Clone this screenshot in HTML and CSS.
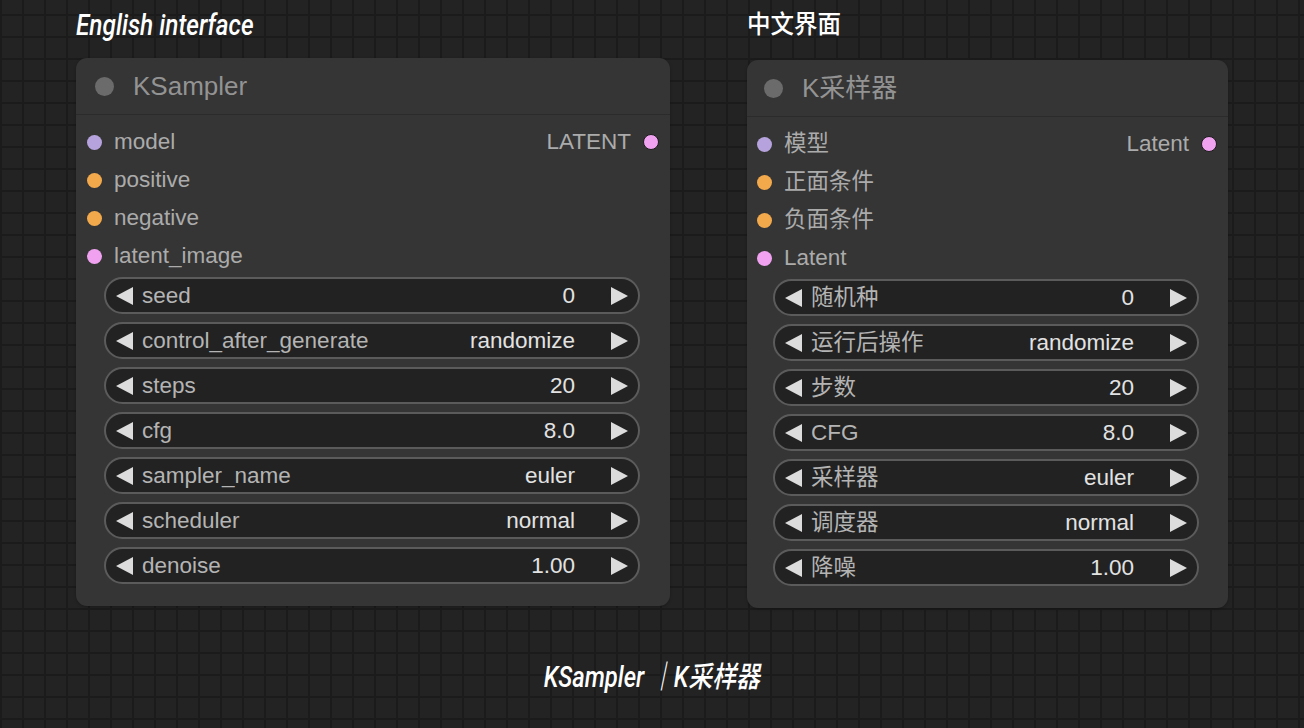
FILE: index.html
```html
<!DOCTYPE html>
<html lang="en">
  <head>
    <meta charset="UTF-8" />
    <meta name="viewport" content="width=device-width, initial-scale=1.0" />
    <title>KSampler | K采样器</title>
    <link rel="stylesheet" href="styles.css">
  </head>
  <body>
    <div class="board">
      <section class="panel panel-en">
        <h2 class="caption"><span>English interface</span></h2>
        <div class="node">
          <div class="node-head">
            <span class="head-dot"></span>
            <span class="node-title">KSampler</span>
          </div>
          <div class="slots">
            <div class="slot-row">
              <span class="slot"><i class="dot dot-model"></i>model</span>
              <span class="slot slot-out">LATENT<i class="dot dot-latent dot-out"></i></span>
            </div>
            <div class="slot-row">
              <span class="slot"><i class="dot dot-cond"></i>positive</span>
            </div>
            <div class="slot-row">
              <span class="slot"><i class="dot dot-cond"></i>negative</span>
            </div>
            <div class="slot-row">
              <span class="slot"><i class="dot dot-latent"></i>latent_image</span>
            </div>
          </div>
          <div class="widgets">
            <div class="widget">
              <svg class="arrow" viewBox="0 0 17 18"><polygon points="0,9 17,0 17,18" /></svg>
              <span class="w-label">seed</span><span class="w-value">0</span>
              <svg class="arrow" viewBox="0 0 17 18"><polygon points="17,9 0,0 0,18" /></svg>
            </div>
            <div class="widget">
              <svg class="arrow" viewBox="0 0 17 18"><polygon points="0,9 17,0 17,18" /></svg>
              <span class="w-label">control_after_generate</span><span class="w-value">randomize</span>
              <svg class="arrow" viewBox="0 0 17 18"><polygon points="17,9 0,0 0,18" /></svg>
            </div>
            <div class="widget">
              <svg class="arrow" viewBox="0 0 17 18"><polygon points="0,9 17,0 17,18" /></svg>
              <span class="w-label">steps</span><span class="w-value">20</span>
              <svg class="arrow" viewBox="0 0 17 18"><polygon points="17,9 0,0 0,18" /></svg>
            </div>
            <div class="widget">
              <svg class="arrow" viewBox="0 0 17 18"><polygon points="0,9 17,0 17,18" /></svg>
              <span class="w-label">cfg</span><span class="w-value">8.0</span>
              <svg class="arrow" viewBox="0 0 17 18"><polygon points="17,9 0,0 0,18" /></svg>
            </div>
            <div class="widget">
              <svg class="arrow" viewBox="0 0 17 18"><polygon points="0,9 17,0 17,18" /></svg>
              <span class="w-label">sampler_name</span><span class="w-value">euler</span>
              <svg class="arrow" viewBox="0 0 17 18"><polygon points="17,9 0,0 0,18" /></svg>
            </div>
            <div class="widget">
              <svg class="arrow" viewBox="0 0 17 18"><polygon points="0,9 17,0 17,18" /></svg>
              <span class="w-label">scheduler</span><span class="w-value">normal</span>
              <svg class="arrow" viewBox="0 0 17 18"><polygon points="17,9 0,0 0,18" /></svg>
            </div>
            <div class="widget">
              <svg class="arrow" viewBox="0 0 17 18"><polygon points="0,9 17,0 17,18" /></svg>
              <span class="w-label">denoise</span><span class="w-value">1.00</span>
              <svg class="arrow" viewBox="0 0 17 18"><polygon points="17,9 0,0 0,18" /></svg>
            </div>
          </div>
        </div>
      </section>

      <section class="panel panel-zh">
        <h2 class="caption caption-zh"><span>中文界面</span></h2>
        <div class="node">
          <div class="node-head">
            <span class="head-dot"></span>
            <span class="node-title">K采样器</span>
          </div>
          <div class="slots">
            <div class="slot-row">
              <span class="slot"><i class="dot dot-model"></i>模型</span>
              <span class="slot slot-out">Latent<i class="dot dot-latent dot-out"></i></span>
            </div>
            <div class="slot-row">
              <span class="slot"><i class="dot dot-cond"></i>正面条件</span>
            </div>
            <div class="slot-row">
              <span class="slot"><i class="dot dot-cond"></i>负面条件</span>
            </div>
            <div class="slot-row">
              <span class="slot"><i class="dot dot-latent"></i>Latent</span>
            </div>
          </div>
          <div class="widgets">
            <div class="widget">
              <svg class="arrow" viewBox="0 0 17 18"><polygon points="0,9 17,0 17,18" /></svg>
              <span class="w-label">随机种</span><span class="w-value">0</span>
              <svg class="arrow" viewBox="0 0 17 18"><polygon points="17,9 0,0 0,18" /></svg>
            </div>
            <div class="widget">
              <svg class="arrow" viewBox="0 0 17 18"><polygon points="0,9 17,0 17,18" /></svg>
              <span class="w-label">运行后操作</span><span class="w-value">randomize</span>
              <svg class="arrow" viewBox="0 0 17 18"><polygon points="17,9 0,0 0,18" /></svg>
            </div>
            <div class="widget">
              <svg class="arrow" viewBox="0 0 17 18"><polygon points="0,9 17,0 17,18" /></svg>
              <span class="w-label">步数</span><span class="w-value">20</span>
              <svg class="arrow" viewBox="0 0 17 18"><polygon points="17,9 0,0 0,18" /></svg>
            </div>
            <div class="widget">
              <svg class="arrow" viewBox="0 0 17 18"><polygon points="0,9 17,0 17,18" /></svg>
              <span class="w-label">CFG</span><span class="w-value">8.0</span>
              <svg class="arrow" viewBox="0 0 17 18"><polygon points="17,9 0,0 0,18" /></svg>
            </div>
            <div class="widget">
              <svg class="arrow" viewBox="0 0 17 18"><polygon points="0,9 17,0 17,18" /></svg>
              <span class="w-label">采样器</span><span class="w-value">euler</span>
              <svg class="arrow" viewBox="0 0 17 18"><polygon points="17,9 0,0 0,18" /></svg>
            </div>
            <div class="widget">
              <svg class="arrow" viewBox="0 0 17 18"><polygon points="0,9 17,0 17,18" /></svg>
              <span class="w-label">调度器</span><span class="w-value">normal</span>
              <svg class="arrow" viewBox="0 0 17 18"><polygon points="17,9 0,0 0,18" /></svg>
            </div>
            <div class="widget">
              <svg class="arrow" viewBox="0 0 17 18"><polygon points="0,9 17,0 17,18" /></svg>
              <span class="w-label">降噪</span><span class="w-value">1.00</span>
              <svg class="arrow" viewBox="0 0 17 18"><polygon points="17,9 0,0 0,18" /></svg>
            </div>
          </div>
        </div>
      </section>
    </div>

    <p class="footer"><span>KSampler ｜K采样器</span></p>
  </body>
</html>
```

FILE: styles.css
```css
body {
  margin: 0;
  width: 1304px;
  height: 728px;
  overflow: hidden;
  background-color: #232323;
  background-image:
    linear-gradient(to right, #1b1b1b 2px, transparent 2px),
    linear-gradient(to bottom, #1b1b1b 2px, transparent 2px);
  background-size: 22px 22px;
  background-position: 0 14px;
  font-family: "Liberation Sans", "Noto Sans CJK SC", sans-serif;
}

.board {
  display: grid;
  grid-template-columns: 594px 481px;
  column-gap: 77px;
  padding-left: 76px;
}

.panel {
  display: flex;
  flex-direction: column;
}

.caption {
  margin: 8px 0 16px;
  height: 34px;
  line-height: 34px;
  font-family: Roboto, "Noto Sans CJK SC", sans-serif;
  font-style: italic;
  font-weight: 500;
  font-size: 29px;
  color: #fff;
  white-space: nowrap;
}

.caption span {
  display: inline-block;
  transform: scaleX(0.84);
  transform-origin: left center;
}

.caption-zh {
  font-size: 25px;
  font-style: normal;
}

.caption-zh span {
  transform: scaleX(0.94);
}

.panel-zh .node {
  margin-top: 2px;
}

.node {
  background-color: #353535;
  border-radius: 11px;
  padding-bottom: 22px;
  box-shadow: 0 1px 3px rgba(0, 0, 0, 0.25);
}

.node-head {
  height: 56px;
  display: flex;
  align-items: center;
  gap: 19px;
  padding-left: 19px;
  border-bottom: 1px solid #2b2b2b;
}

.panel-zh .node-head {
  padding-left: 17px;
}

.head-dot {
  width: 19px;
  height: 19px;
  border-radius: 50%;
  background-color: #6b6b6b;
}

.node-title {
  font-size: 26px;
  line-height: 28px;
  color: #939393;
}

.slots {
  padding: 8px 11px 0 11px;
}

.panel-zh .slots {
  padding-left: 10px;
}

.slot-row {
  height: 38px;
  display: flex;
  align-items: center;
  justify-content: space-between;
}

.slot {
  display: flex;
  align-items: center;
  gap: 12px;
  font-size: 22.5px;
  line-height: 26px;
  color: #ababab;
}

.dot {
  width: 15px;
  height: 15px;
  border-radius: 50%;
  box-sizing: border-box;
}

.dot-model {
  background-color: #b6a3dd;
}

.dot-cond {
  background-color: #f2a94c;
}

.dot-latent {
  background-color: #f0a2f0;
}

.dot-out {
  width: 16px;
  height: 16px;
  border: 1.5px solid #1c1c1c;
}

.widgets {
  display: flex;
  flex-direction: column;
  gap: 8px;
  padding: 2px 30px 0 28px;
}

.panel-zh .widgets {
  padding: 2px 29px 0 26px;
}

.widget {
  height: 37px;
  box-sizing: border-box;
  display: flex;
  align-items: center;
  padding: 0 10px;
  background-color: #222;
  border: 2px solid #5b5b5b;
  border-radius: 19px;
  font-size: 22.5px;
  line-height: 26px;
}

.arrow {
  width: 17px;
  height: 18px;
  fill: #dcdcdc;
  flex-shrink: 0;
}

.w-label {
  flex: 1;
  margin-left: 9px;
  color: #b4b4b4;
}

.w-value {
  margin-right: 36px;
  color: #e2e2e2;
}

.footer {
  margin: 51px 0 0;
  height: 36px;
  line-height: 36px;
  text-align: center;
  font-family: Roboto, "Noto Sans CJK SC", sans-serif;
  font-style: italic;
  font-weight: 500;
  font-size: 29px;
  color: #fff;
}

.footer span {
  display: inline-block;
  transform: scaleX(0.82);
}
```
